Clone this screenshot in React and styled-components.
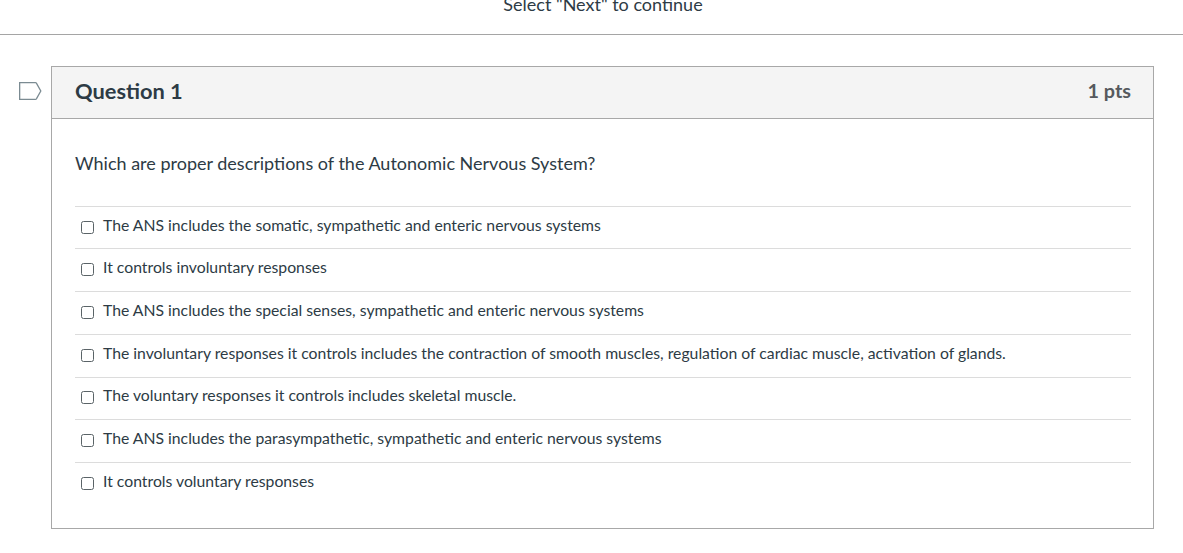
import React from 'react';
import styled, { createGlobalStyle } from 'styled-components';

const options = [
	'The ANS includes the somatic, sympathetic and enteric nervous systems',
	'It controls involuntary responses',
	'The ANS includes the special senses, sympathetic and enteric nervous systems',
	'The involuntary responses it controls includes the contraction of smooth muscles, regulation of cardiac muscle, activation of glands.',
	'The voluntary responses it controls includes skeletal muscle.',
	'The ANS includes the parasympathetic, sympathetic and enteric nervous systems',
	'It controls voluntary responses',
];

const GlobalStyle = createGlobalStyle`
	html, body {
		margin: 0;
		background: #fff;
		overflow: hidden;
	}

	body {
		font-family: Lato, "Liberation Sans", sans-serif;
		color: #2d3b45;
	}
`;

const Page = styled.div`
	width: 1183px;
	height: 553px;
	overflow: hidden;
`;

const Notice = styled.div`
	display: flow-root;
	height: 34px;
	border-bottom: 1px solid #a5a5a5;
	margin-bottom: 31px;
`;

const NoticeText = styled.p`
	margin: -8px 0 0 23px;
	font-size: 18px;
	line-height: 24px;
	text-align: center;
`;

const QuestionRow = styled.div`
	display: flex;
	align-items: flex-start;
	padding-left: 19px;
`;

const FlagSlot = styled.div`
	width: 32px;
	flex: none;
	padding-top: 15px;
`;

const Flag = styled.svg`
	display: block;
	width: 23px;
	height: 20px;
`;

const Card = styled.section`
	width: 1103px;
	height: 463px;
	box-sizing: border-box;
	border: 1px solid #a8a8a8;
`;

const CardHeader = styled.header`
	height: 52px;
	box-sizing: border-box;
	display: flex;
	align-items: center;
	justify-content: space-between;
	padding: 0 22px 4px 23px;
	background: #f4f4f4;
	border-bottom: 1px solid #a8a8a8;
`;

const Title = styled.h2`
	margin: 0;
	font-size: 21.8px;
	font-weight: 700;
`;

const Points = styled.span`
	margin-bottom: 2px;
	font-size: 19.8px;
	font-weight: 700;
	color: #56595d;
`;

const CardBody = styled.div`
	padding: 32px 22px 0 23px;
`;

const Prompt = styled.p`
	margin: 0 0 30.75px;
	font-size: 18px;
	line-height: 24px;
`;

const OptionList = styled.ul`
	margin: 0;
	padding: 0;
	list-style: none;
`;

const Option = styled.li`
	height: 42.72px;
	box-sizing: border-box;
	display: flex;
	align-items: center;
	padding: 0 0 7px 6px;
	border-top: 1px solid #dcdcdc;
	font-size: 15.76px;
`;

const Box = styled.span`
	width: 11px;
	height: 11px;
	flex: none;
	margin: 6px 9px 0 0;
	border: 1.5px solid #5a6367;
	border-radius: 2.5px;
`;

const App = () => (
	<Page>
		<GlobalStyle />
		<Notice>
			<NoticeText>Select "Next" to continue</NoticeText>
		</Notice>
		<QuestionRow>
			<FlagSlot>
				<Flag viewBox="0 0 23 20" fill="none">
					<path d="M.65 1.650H16.500Q17 1.650 17.400 2.200L21.800 10 17.400 17.800Q17 18.350 16.500 18.350H.65z" stroke="#7b8b92" strokeWidth="1.300" />
				</Flag>
			</FlagSlot>
			<Card>
				<CardHeader>
					<Title>Question 1</Title>
					<Points>1 pts</Points>
				</CardHeader>
				<CardBody>
					<Prompt>Which are proper descriptions of the Autonomic Nervous System?</Prompt>
					<OptionList>
						{options.map((text) => (
							<Option key={text}>
								<Box />
								{text}
							</Option>
						))}
					</OptionList>
				</CardBody>
			</Card>
		</QuestionRow>
	</Page>
);

export default App;
